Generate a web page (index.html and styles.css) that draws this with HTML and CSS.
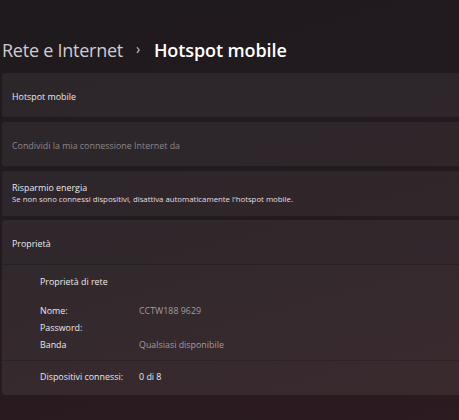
FILE: index.html
```html
<!DOCTYPE html>
<html lang="it">
<head>
<meta charset="utf-8">
<link rel="stylesheet" href="styles.css">
</head>
<body>
<div class="page">
  <h1 class="crumbs"><span class="parent">Rete e Internet</span><span class="chev">›</span><span class="current">Hotspot mobile</span></h1>
  <div class="list">
    <div class="card"><span class="label">Hotspot mobile</span></div>
    <div class="card"><span class="label dim">Condividi la mia connessione Internet da</span></div>
    <div class="card two"><span class="label">Risparmio energia</span><span class="sub">Se non sono connessi dispositivi, disattiva automaticamente l'hotspot mobile.</span></div>
    <div class="group">
      <div class="card head"><span class="label">Proprietà</span></div>
      <div class="body">
        <div class="props">
          <div class="ptitle">Proprietà di rete</div>
          <div class="grid">
            <span class="k">Nome:</span><span class="v">CCTW188 9629</span>
            <span class="k">Password:</span><span class="v"></span>
            <span class="k">Banda</span><span class="v">Qualsiasi disponibile</span>
          </div>
        </div>
        <div class="conn">
          <span class="k">Dispositivi connessi:</span><span class="v bright">0 di 8</span>
        </div>
      </div>
    </div>
  </div>
  <h2 class="section">Supporto correlato</h2>
</div>
</body>
</html>
```
FILE: styles.css
```css
html, body {
  margin: 0;
  padding: 0;
  height: 100%;
  overflow: hidden;
}
body {
  background: linear-gradient(165deg, #1f1a1e 0%, #221a1e 40%, #2c1b20 100%);
  font-family: "Open Sans", "Noto Sans", sans-serif;
  color: #e6e3e5;
}
.page {
  padding-left: 2px;
  margin-right: -12px;
}
.crumbs {
  margin: 0;
  padding-top: 37px;
  font-size: 18px;
  font-weight: 400;
  line-height: 26px;
  display: flex;
  align-items: center;
  letter-spacing: -0.25px;
}
.parent { color: #cfcccf; }
.chev {
  color: #cfcccf;
  font-size: 14px;
  margin: 0 14px 0 13px;
  position: relative;
  top: -1px;
}
.current { color: #ffffff; font-weight: 600; letter-spacing: -0.1px; }
.list {
  display: flex;
  flex-direction: column;
  gap: 4px;
  margin-top: 10px;
}
.card {
  height: 45px;
  box-sizing: border-box;
  background: rgba(255, 255, 255, 0.055);
  border-radius: 3px;
  border-bottom: 1px solid rgba(0, 0, 0, 0.25);
  padding-left: 10px;
  padding-top: 3px;
  display: flex;
  flex-direction: column;
  justify-content: center;
}
.card.two { height: 46px; padding-top: 0; }
.label { font-size: 8.9px; line-height: 12px; color: #ebe8ea; }
.label.dim { color: #8d878b; }
.sub { font-size: 7.8px; line-height: 11px; color: #e3dfe1; }
.group { display: flex; flex-direction: column; margin-top: -1px; }
.card.head {
  height: 45px;
  border-radius: 3px 3px 0 0;
  border-bottom: 1px solid rgba(0, 0, 0, 0.18);
  background: rgba(255, 255, 255, 0.06);
}
.body {
  background: rgba(255, 255, 255, 0.065);
  border-radius: 0 0 3px 3px;
  height: 130px;
  box-sizing: border-box;
}
.props {
  padding: 11px 0 0 38px;
  height: 96px;
  box-sizing: border-box;
  border-bottom: 1px solid rgba(0, 0, 0, 0.16);
}
.ptitle { font-size: 8.9px; line-height: 12px; color: #ebe8ea; margin-bottom: 17px; }
.grid {
  display: grid;
  grid-template-columns: 99px auto;
  row-gap: 5px;
}
.k { font-size: 8.9px; line-height: 12px; color: #ebe8ea; }
.v { font-size: 8.9px; line-height: 12px; color: #a29ca0; min-height: 12px; }
.v.bright { color: #ebe8ea; }
.conn {
  display: grid;
  grid-template-columns: 99px auto;
  padding: 10px 0 0 38px;
}
.section {
  margin: 0;
  margin-top: 22px;
  font-size: 13px;
  font-weight: 600;
  line-height: 16px;
  color: #ffffff;
}
```
